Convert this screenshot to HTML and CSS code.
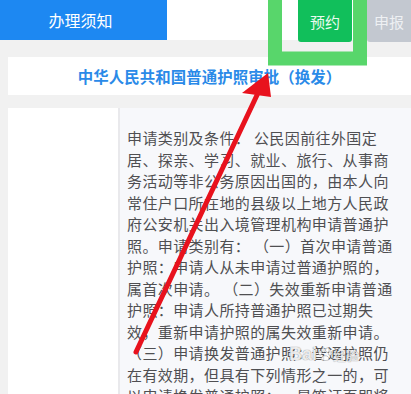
FILE: index.html
```html
<!DOCTYPE html>
<html lang="zh-CN">
<head>
<meta charset="utf-8">
<title>办理须知</title>
<link rel="stylesheet" href="styles.css">
</head>
<body>
<div class="page">
  <header class="topbar">
    <div class="tab">办理须知</div>
    <div class="actions">
      <div class="btn btn-green">预约</div>
      <div class="btn btn-gray">申报</div>
    </div>
  </header>
  <main class="body">
    <div class="title-card">中华人民共和国普通护照审批（换发）</div>
    <div class="content">
      <div class="side"></div>
      <div class="detail">
        <p class="text">申请类别及条件： 公民因前往外国定<br>居、探亲、学习、就业、旅行、从事商<br>务活动等非公务原因出国的，由本人向<br>常住户口所在地的县级以上地方人民政<br>府公安机关出入境管理机构申请普通护<br>照。申请类别有： （一）首次申请普通<br>护照：申请人从未申请过普通护照的，<br>属首次申请。 （二）失效重新申请普通<br>护照：申请人所持普通护照已过期失<br>效，重新申请护照的属失效重新申请。<br>（三）申请换发普通护照：普通护照仍<br>在有效期，但具有下列情形之一的，可<br>以申请换发普通护照：一是签证页即将</p>
      </div>
    </div>
  </main>
  <div class="watermark"><span class="wm-en">Bai</span><svg class="paw" width="16" height="15" viewBox="0 0 20 18"><g fill="rgba(255,255,255,0.8)" stroke="rgba(110,110,110,0.45)" stroke-width="1"><ellipse cx="4" cy="7" rx="2.2" ry="2.8"/><ellipse cx="8" cy="3.5" rx="2.2" ry="2.8"/><ellipse cx="13" cy="3.5" rx="2.2" ry="2.8"/><ellipse cx="16.5" cy="7.5" rx="2.2" ry="2.8"/><path d="M5 15 C5 9 15 9 15 15 C15 17 5 17 5 15 Z"/></g></svg><span class="wm-cn">经验</span></div>
  <svg class="annot" width="411" height="394" viewBox="0 0 411 394">
    <path d="M275 -10 V58.5 H360 V-10" fill="none" stroke="#58d66b" stroke-width="14" stroke-linejoin="miter"/>
    <line x1="136" y1="352" x2="258" y2="93" stroke="#e8121d" stroke-width="5" stroke-linecap="round"/>
    <polygon points="268,73 242,93 271,97" fill="#e8121d"/>
  </svg>
</div>
</body>
</html>
```
FILE: styles.css
```css
html, body {
  margin: 0;
  padding: 0;
}
body {
  width: 411px;
  height: 394px;
  overflow: hidden;
  background: #f1f1f1;
  font-family: "Noto Sans CJK SC", "Noto Sans", sans-serif;
}
.page {
  position: relative;
  width: 411px;
  height: 394px;
  overflow: hidden;
}
.topbar {
  display: flex;
  height: 40px;
  background: #ffffff;
}
.tab {
  width: 167px;
  height: 40px;
  background: #1d88f2;
  color: #ffffff;
  font-size: 16px;
  display: flex;
  align-items: center;
  justify-content: center;
  padding-right: 6px;
  box-sizing: border-box;
}
.actions {
  margin-left: auto;
  display: flex;
  align-items: flex-start;
  gap: 15px;
}
.btn {
  height: 42px;
  display: flex;
  align-items: center;
  justify-content: center;
  font-size: 15px;
  border-radius: 0 0 3px 3px;
}
.btn-green {
  width: 54px;
  background: #11bf5b;
  color: #eafbf0;
}
.btn-gray {
  width: 44px;
  background: #c3c8d0;
  color: #eef0f3;
  border-radius: 0 0 0 3px;
}
.body {
  padding: 17px 0 0 8px;
  display: flex;
  flex-direction: column;
  gap: 13px;
}
.title-card {
  height: 38px;
  background: #ffffff;
  color: #2a8ae8;
  font-size: 15.4px;
  font-weight: bold;
  display: flex;
  align-items: center;
  justify-content: center;
  letter-spacing: 0.1px;
}
.content {
  display: flex;
  height: 300px;
}
.side {
  width: 110px;
  background: #ffffff;
  border-right: 2px solid #e9e9ec;
}
.detail {
  flex: 1;
  background: #f7f8fb;
  padding: 19px 0 0 7px;
}
.text {
  margin: 0;
  color: #4f4f52;
  font-size: 15px;
  letter-spacing: 0.4px;
  line-height: 21.5px;
  white-space: nowrap;
}
.watermark {
  position: absolute;
  left: 289px;
  top: 344px;
  display: flex;
  align-items: center;
  gap: 0;
  color: rgba(255, 255, 255, 0.85);
  text-shadow: 0 0 1px rgba(90, 90, 90, 0.6), 0 0 1px rgba(90, 90, 90, 0.4);
}
.wm-en {
  font-family: "Liberation Sans", sans-serif;
  font-size: 18px;
  font-weight: bold;
}
.wm-cn {
  font-size: 13px;
}
.annot {
  position: absolute;
  left: 0;
  top: 0;
  pointer-events: none;
}
```
